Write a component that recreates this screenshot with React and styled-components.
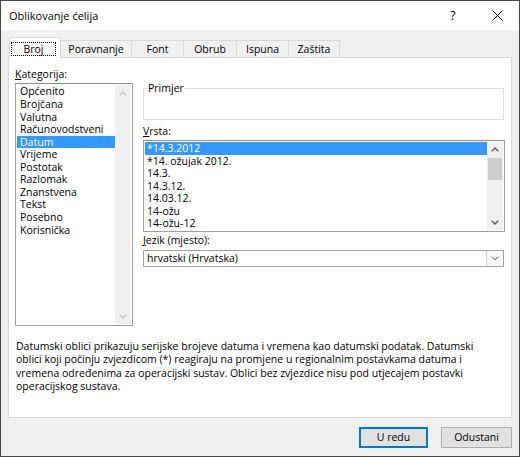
import React from 'react';
import styled, { createGlobalStyle, css } from 'styled-components';

const GlobalStyle = createGlobalStyle`
  html, body { margin: 0; padding: 0; background: #ffffff; }
  body {
    font-family: "Open Sans", "Noto Sans", sans-serif;
    font-size: 10.5px;
    color: #000;
  }
  * { box-sizing: border-box; }
`;

const Window = styled.div`
  width: 520px;
  height: 457px;
  border: 1px solid #474747;
  display: flex;
  flex-direction: column;
  background: #f0f0f0;
  overflow: hidden;
`;

const TitleBar = styled.div`
  height: 29px;
  flex: none;
  background: #fff;
  display: flex;
  align-items: center;
  padding-left: 8px;
`;

const Title = styled.div`
  flex: 1;
  font-size: 11px;
  line-height: 14px;
  padding-top: 1px;
  white-space: nowrap;
`;

const TitleButton = styled.div`
  width: 44px;
  height: 29px;
  display: flex;
  align-items: center;
  justify-content: center;
  font-size: 12.5px;
  color: #000;
`;

const Body = styled.div`
  flex: 1;
  display: flex;
  flex-direction: column;
  padding: 7px 7px 8px 7px;
`;

const TabStrip = styled.div`
  display: flex;
  align-items: flex-end;
  height: 20px;
  margin-left: 1px;
  flex: none;
`;

const Tab = styled.div`
  flex: none;
  width: ${(p) => p.$w}px;
  height: 17px;
  margin-left: -1px;
  &:first-child { margin-left: 0; }
  border: 1px solid #d9d9d9;
  border-bottom: none;
  background: #f0f0f0;
  display: flex;
  align-items: flex-end;
  justify-content: center;
  padding-bottom: 1px;
  line-height: 13px;
  white-space: nowrap;
  ${(p) =>
    p.$active &&
    css`
      height: 21px;
      margin-bottom: -1px;
      background: #fff;
      position: relative;
      z-index: 1;
      padding-bottom: 2px;
      padding-left: 1px;
      justify-content: flex-start;
    `}
`;

const FocusBox = styled.span`
  display: flex;
  align-items: center;
  justify-content: center;
  width: 45px;
  height: 14px;
  border: 1px dotted #000;
  line-height: 12px;
`;

const Panel = styled.div`
  flex: none;
  height: 361px;
  background: #fff;
  border: 1px solid #d9d9d9;
  padding: 10px 6px 0 6px;
  display: flex;
  flex-direction: column;
`;

const TopSection = styled.div`
  display: flex;
  gap: 10px;
  align-items: flex-start;
`;

const LeftCol = styled.div`
  width: 118px;
  flex: none;
  display: flex;
  flex-direction: column;
`;

const RightCol = styled.div`
  width: 362px;
  flex: none;
  display: flex;
  flex-direction: column;
`;

const Label = styled.div`
  height: 13px;
  line-height: 13px;
  white-space: nowrap;
  margin-top: ${(p) => p.$mt || 0}px;
  margin-bottom: ${(p) => p.$mb || 0}px;
`;

const AccessKey = styled.span`
  text-decoration: underline;
  text-underline-offset: 1px;
`;

const ListBox = styled.div`
  height: ${(p) => p.$h}px;
  border: 1px solid #a0a0a0;
  border-top-color: #8f8f8f;
  padding: 1px;
  display: flex;
  background: #fff;
`;

const ListItems = styled.div`
  flex: 1;
  min-width: 0;
  padding-top: ${(p) => p.$pt || 0}px;
`;

const Row = styled.div`
  height: ${(p) => p.$rh}px;
  line-height: ${(p) => p.$rh}px;
  padding-left: ${(p) => p.$pl}px;
  white-space: nowrap;
  overflow: hidden;
  ${(p) =>
    p.$selected &&
    css`
      background: #3399ff;
      color: #fff;
    `}
`;

const ScrollBar = styled.div`
  width: 16px;
  flex: none;
  background: #f0f0f0;
  display: flex;
  flex-direction: column;
`;

const ArrowBox = styled.div`
  height: ${(p) => p.$h}px;
  flex: none;
  display: flex;
  align-items: center;
  justify-content: center;
`;

const Thumb = styled.div`
  height: 22px;
  margin: 1px 1px 0 1px;
  background: #cdcdcd;
  flex: none;
`;

const Spacer = styled.div`
  flex: 1;
`;

const GroupBox = styled.fieldset`
  margin: 14px 1px 0 0;
  padding: 0 0 0 3px;
  border: 1px solid #dcdcdc;
  min-width: 0;
`;

const GroupLegend = styled.legend`
  padding: 0 1px;
  line-height: 13px;
`;

const GroupContent = styled.div`
  height: 24px;
`;

const Combo = styled.div`
  height: 17px;
  margin-right: 1px;
  border: 1px solid #a0a0a0;
  display: flex;
  background: #fff;
`;

const ComboText = styled.div`
  flex: 1;
  padding-left: 3px;
  line-height: 15px;
  white-space: nowrap;
`;

const ComboButton = styled.div`
  width: 17px;
  flex: none;
  border: 1px solid #d4d4d4;
  border-right: none;
  border-top: none;
  border-bottom: none;
  background: #f7f7f7;
  display: flex;
  align-items: center;
  justify-content: center;
`;

const Description = styled.p`
  margin: 14px 0 0 0;
  padding-left: 1px;
  line-height: 13.33px;
  white-space: nowrap;
`;

const ButtonRow = styled.div`
  display: flex;
  justify-content: flex-end;
  gap: 13px;
  margin-top: 9px;
  flex: none;
`;

const Button = styled.button`
  width: ${(p) => p.$w}px;
  height: 21px;
  background: #e1e1e1;
  border: 1px solid #adadad;
  font-family: inherit;
  font-size: 10.5px;
  color: #000;
  padding: 0;
  line-height: 17px;
  ${(p) =>
    p.$primary &&
    css`
      border: 2px solid #0078d7;
    `}
`;

const Chevron = ({ dir, color = '#606060', w = 8, h = 5, sw = 1.4 }) => (
  <svg width={w} height={h} viewBox="0 0 8 5" fill="none">
    <path
      d={dir === 'up' ? 'M0.8 4.3 L4 1.1 L7.2 4.3' : 'M0.8 0.7 L4 3.9 L7.2 0.7'}
      stroke={color}
      strokeWidth={sw}
    />
  </svg>
);

const CloseIcon = () => (
  <svg width="11" height="11" viewBox="0 0 11 11" fill="none">
    <path d="M0.5 0.5 L10.5 10.5 M10.5 0.5 L0.5 10.5" stroke="#000" strokeWidth="1" />
  </svg>
);

const tabs = [
  { label: 'Broj', w: 52, active: true },
  { label: 'Poravnanje', w: 72 },
  { label: 'Font', w: 53 },
  { label: 'Obrub', w: 54 },
  { label: 'Ispuna', w: 53 },
  { label: 'Zaštita', w: 52 },
];

const categories = [
  'Općenito',
  'Brojčana',
  'Valutna',
  'Računovodstveni',
  'Datum',
  'Vrijeme',
  'Postotak',
  'Razlomak',
  'Znanstvena',
  'Tekst',
  'Posebno',
  'Korisnička',
];

const types = [
  '*14.3.2012',
  '*14. ožujak 2012.',
  '14.3.',
  '14.3.12.',
  '14.03.12.',
  '14-ožu',
  '14-ožu-12',
];

export default function App() {
  return (
    <>
      <GlobalStyle />
      <Window>
        <TitleBar>
          <Title>Oblikovanje ćelija</Title>
          <TitleButton>?</TitleButton>
          <TitleButton>
            <CloseIcon />
          </TitleButton>
        </TitleBar>
        <Body>
          <TabStrip>
            {tabs.map((t) => (
              <Tab key={t.label} $w={t.w} $active={t.active}>
                {t.active ? <FocusBox>{t.label}</FocusBox> : t.label}
              </Tab>
            ))}
          </TabStrip>
          <Panel>
            <TopSection>
              <LeftCol>
                <Label $mb={2}>
                  <AccessKey>K</AccessKey>ategorija:
                </Label>
                <ListBox $h={243}>
                  <ListItems $pt={0.4}>
                    {categories.map((c) => (
                      <Row key={c} $rh={12.57} $pl={3} $selected={c === 'Datum'}>
                        {c}
                      </Row>
                    ))}
                  </ListItems>
                  <ScrollBar>
                    <ArrowBox $h={16}>
                      <Chevron dir="up" color="#c4c4c4" />
                    </ArrowBox>
                    <Spacer />
                    <ArrowBox $h={16}>
                      <Chevron dir="down" color="#c4c4c4" />
                    </ArrowBox>
                  </ScrollBar>
                </ListBox>
              </LeftCol>
              <RightCol>
                <GroupBox>
                  <GroupLegend>Primjer</GroupLegend>
                  <GroupContent />
                </GroupBox>
                <Label $mt={5} $mb={2}>
                  <AccessKey>V</AccessKey>rsta:
                </Label>
                <ListBox $h={92}>
                  <ListItems>
                    {types.map((t, i) => (
                      <Row key={t} $rh={12.5} $pl={2} $selected={i === 0}>
                        {t}
                      </Row>
                    ))}
                  </ListItems>
                  <ScrollBar>
                    <ArrowBox $h={15}>
                      <Chevron dir="up" />
                    </ArrowBox>
                    <Thumb />
                    <Spacer />
                    <ArrowBox $h={15}>
                      <Chevron dir="down" />
                    </ArrowBox>
                  </ScrollBar>
                </ListBox>
                <Label $mt={2} $mb={3}>
                  <AccessKey>J</AccessKey>ezik (mjesto):
                </Label>
                <Combo>
                  <ComboText>hrvatski (Hrvatska)</ComboText>
                  <ComboButton>
                    <Chevron dir="down" w={8} h={5} sw={1} color="#555" />
                  </ComboButton>
                </Combo>
              </RightCol>
            </TopSection>
            <Description>
              Datumski oblici prikazuju serijske brojeve datuma i vremena kao datumski podatak. Datumski
              <br />
              oblici koji počinju zvjezdicom (*) reagiraju na promjene u regionalnim postavkama datuma i
              <br />
              vremena određenima za operacijski sustav. Oblici bez zvjezdice nisu pod utjecajem postavki
              <br />
              operacijskog sustava.
            </Description>
          </Panel>
          <ButtonRow>
            <Button $w={69} $primary>
              U redu
            </Button>
            <Button $w={71}>Odustani</Button>
          </ButtonRow>
        </Body>
      </Window>
    </>
  );
}
